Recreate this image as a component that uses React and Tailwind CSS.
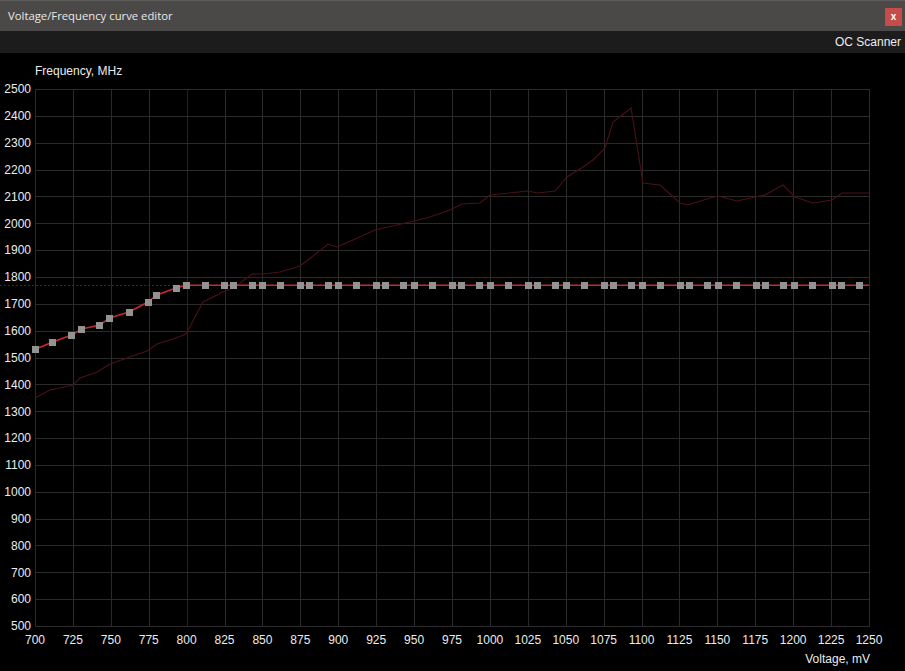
import React from "react";

const X0 = 35, X1 = 869, Y0 = 89, Y1 = 626;
const vx = (mv) => X0 + ((mv - 700) / 550) * (X1 - X0);
const fy = (f) => Y0 + ((2500 - f) / 2000) * (Y1 - Y0);

const leftPts = [
  [35.7, 349], [52.7, 342], [71.7, 335], [81.7, 329], [99.7, 325], [109.7, 318],
  [129, 312], [148, 302], [156.7, 295], [176, 288],
];
const flatXs = [186, 205, 224, 233, 252, 262, 280, 300, 309, 328, 338, 356, 376, 385, 403, 414, 432, 452, 461, 479, 490, 508, 528, 537, 555, 566, 584, 604, 613, 631, 642, 660, 680, 689, 707, 718, 736, 756, 765, 783, 794, 812, 832, 841, 859];
const FLAT_Y = 285.3;

const dim = [
  [35, 398], [50, 390], [73, 385], [80, 378], [97, 372], [110, 364], [127, 358], [147, 351],
  [157, 344], [173, 339], [186, 334], [203, 302], [223, 292], [235, 287], [252, 274], [263, 274],
  [280, 272], [300, 266], [313, 256], [328, 244], [337, 247], [353, 240], [375, 230], [410, 222],
  [430, 217], [450, 210], [462, 204], [480, 203], [490, 195], [510, 193], [527, 191], [538, 193],
  [555, 191], [567, 177], [583, 167], [593, 160], [605, 148], [613, 122], [631, 108], [643, 183],
  [660, 185], [680, 203], [688, 205], [707, 199], [718, 196], [737, 201], [755, 197], [765, 195],
  [783, 185], [795, 197], [813, 203], [832, 200], [842, 193], [869, 193],
];

const labelCls = "fill-[#ececec] text-[12px] font-['Liberation_Sans',Arial,sans-serif]";

function Chart() {
  const vTicks = [];
  for (let mv = 700; mv <= 1250; mv += 25) vTicks.push(mv);
  const fTicks = [];
  for (let f = 500; f <= 2500; f += 100) fTicks.push(f);
  const redPts = [...leftPts, ...flatXs.map((x) => [x, FLAT_Y]), [X1, FLAT_Y]];
  const squares = [...leftPts, ...flatXs.map((x) => [x, FLAT_Y])];
  return (
    <svg width="905" height="618" viewBox="0 53 905 618" className="block">
      <g shapeRendering="crispEdges">
        {vTicks.map((mv) => {
          const x = Math.round(vx(mv)) + 0.5;
          return (
            <line key={"v" + mv} x1={x} x2={x} y1={Y0} y2={Y1 + 0.5} stroke={mv === 800 ? "#3d1717" : "#2b2b2b"} strokeWidth="1" />
          );
        })}
        {fTicks.map((f) => {
          const y = Math.round(fy(f)) + 0.5;
          return <line key={"h" + f} x1={X0 + 0.5} x2={X1 + 0.5} y1={y} y2={y} stroke="#2b2b2b" strokeWidth="1" />;
        })}
        <line x1="0" x2="186" y1="285.5" y2="285.5" stroke="#5a1c1c" strokeWidth="1" strokeDasharray="2 2" />
      </g>
      <polyline points={dim.map((p) => p.join(",")).join(" ")} fill="none" stroke="#4a1116" strokeWidth="1.1" />
      <polyline points={redPts.map((p) => p.join(",")).join(" ")} fill="none" stroke="#c62a30" strokeWidth="1.6" />
      {squares.map(([x, y], i) => (
        <rect key={i} x={x - 3.5} y={y - 3.5} width="7" height="7" fill="#939393" shapeRendering="crispEdges" />
      ))}
      {fTicks.map((f) => (
        <text key={"fl" + f} x="31" y={fy(f) + 4.3} textAnchor="end" className={labelCls}>{f}</text>
      ))}
      {vTicks.map((mv) => (
        <text key={"vl" + mv} x={vx(mv)} y="643.5" textAnchor="middle" className={labelCls}>{mv}</text>
      ))}
      <text x="35" y="75" className={labelCls}>Frequency, MHz</text>
      <text x="870" y="663" textAnchor="end" className={labelCls}>Voltage, mV</text>
    </svg>
  );
}

export default function App() {
  return (
    <div className="w-[905px] h-[671px] bg-black flex flex-col overflow-hidden">
      <div className="h-[31px] bg-[#4a4948] border-t border-[#5c5b5a] flex items-center justify-between pl-[8px] pr-[3px]">
        <span className="text-[11.3px] text-[#e8e8e8] leading-none font-['Open_Sans','Noto_Sans',sans-serif]">
          Voltage/Frequency curve editor
        </span>
        <div className="w-[17px] h-[18px] bg-[#c64b4b] flex items-center justify-center mt-[1px]">
          <span className="text-[10px] font-bold text-white leading-none font-['Liberation_Sans',Arial,sans-serif]">x</span>
        </div>
      </div>
      <div className="h-[22px] bg-[#1c1c1c] flex items-center justify-end pr-[4px]">
        <span className="text-[12px] text-[#ececec] leading-none font-['Liberation_Sans',Arial,sans-serif]">OC Scanner</span>
      </div>
      <Chart />
    </div>
  );
}
